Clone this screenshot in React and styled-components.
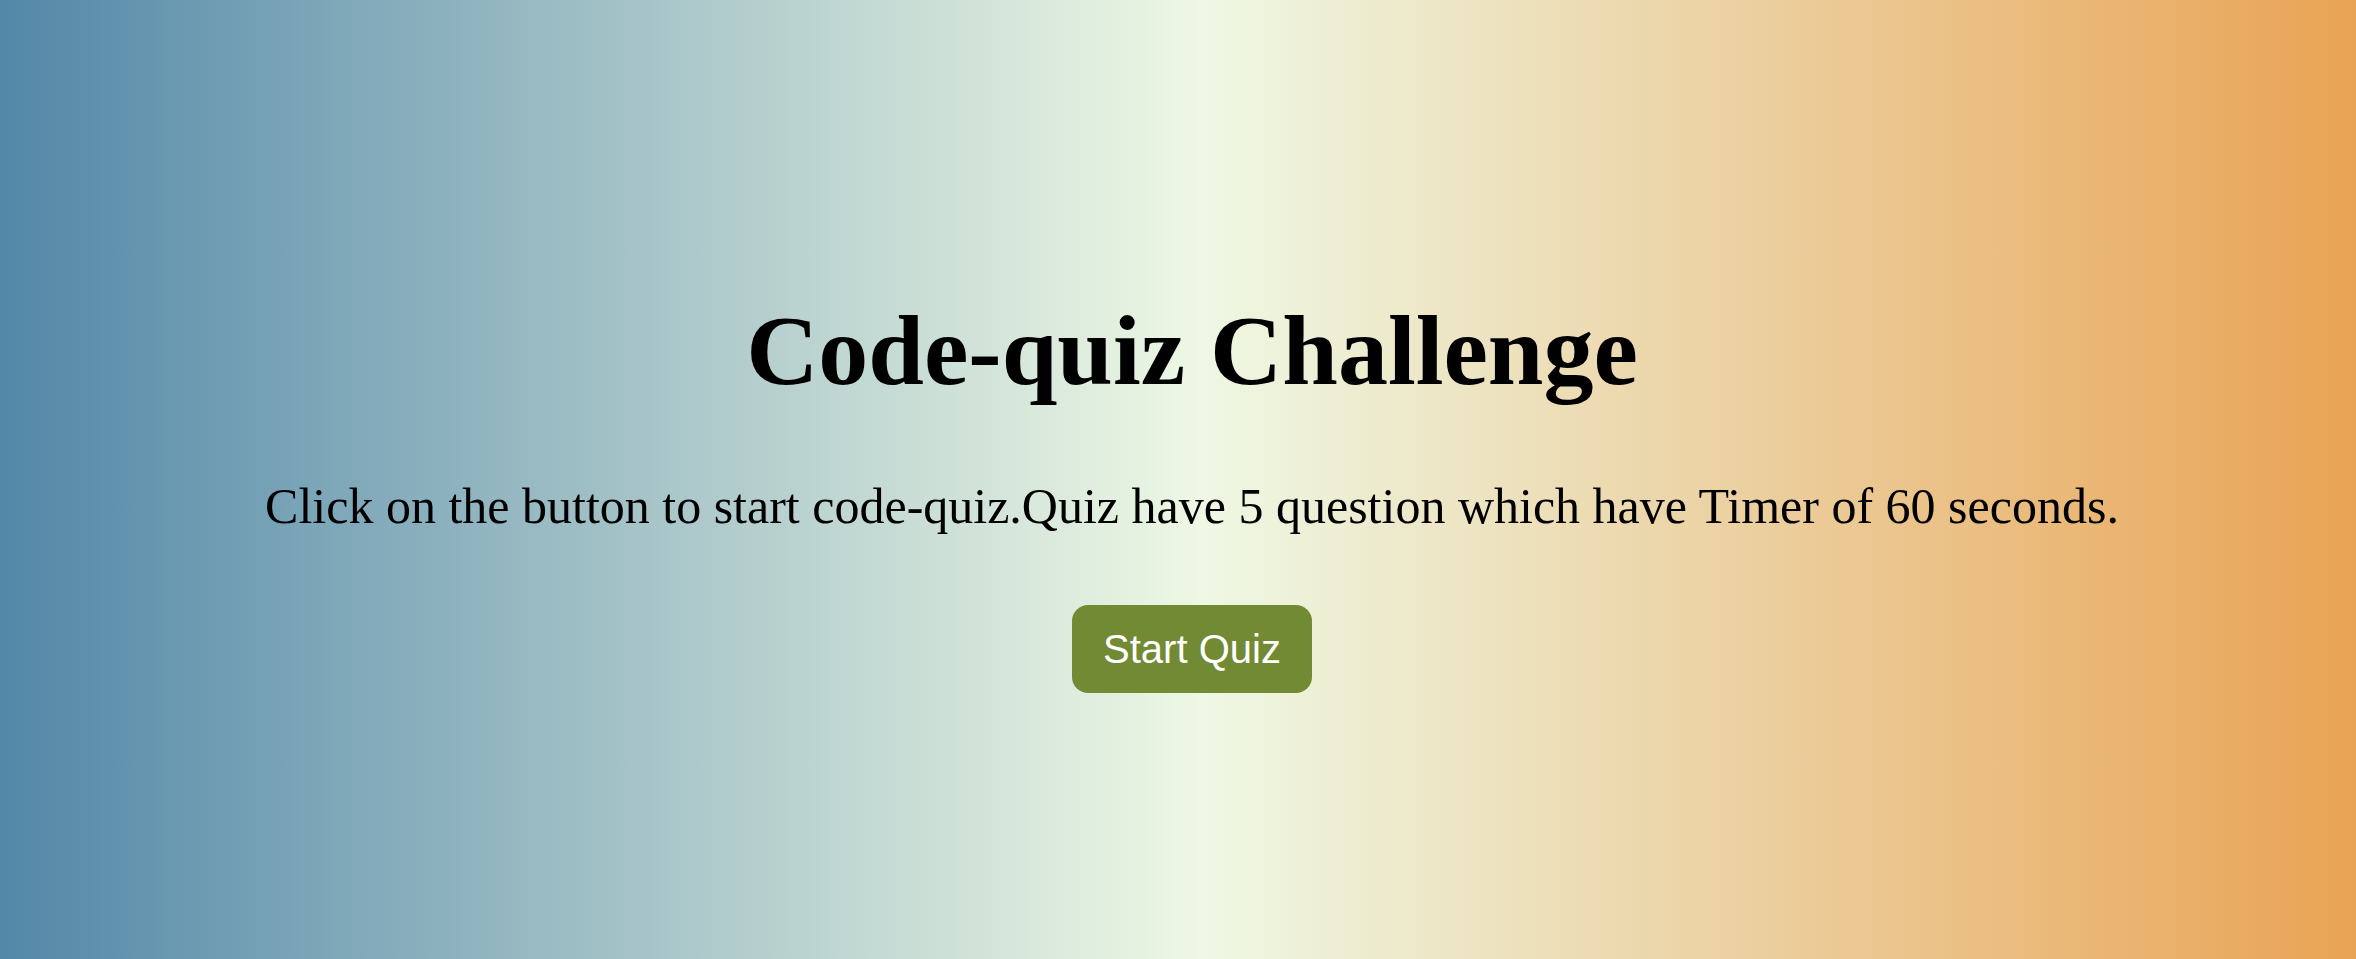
import React from "react";
import styled, { createGlobalStyle } from "styled-components";

const GlobalStyle = createGlobalStyle`
  html, body {
    margin: 0;
    padding: 0;
  }
  body {
    font-family: "Liberation Serif", "Times New Roman", serif;
  }
`;

const Page = styled.main`
  width: 100vw;
  min-height: 100vh;
  box-sizing: border-box;
  padding: 293px 0 0 28px;
  display: flex;
  flex-direction: column;
  align-items: center;
  text-align: center;
  background: linear-gradient(to right, #5388a8 0%, #eef8e4 51%, #e9a354 100%);
`;

const Title = styled.h1`
  margin: 0;
  font-size: 100px;
  font-weight: bold;
  line-height: 115px;
  color: #000;
`;

const Intro = styled.p`
  margin: 70px 0 0;
  font-size: 50px;
  line-height: 57px;
  color: #000;
`;

const StartButton = styled.button`
  margin-top: 70px;
  height: 88px;
  padding: 0 31px;
  border: 0;
  border-radius: 16px;
  background: #738a35;
  color: #fff;
  font-family: "Liberation Sans", Arial, sans-serif;
  font-size: 40px;
  cursor: pointer;
`;

function App() {
  return (
    <>
      <GlobalStyle />
      <Page>
        <Title>Code-quiz Challenge</Title>
        <Intro>
          Click on the button to start code-quiz.Quiz have 5 question which have Timer of 60 seconds.
        </Intro>
        <StartButton>Start Quiz</StartButton>
      </Page>
    </>
  );
}

export default App;
